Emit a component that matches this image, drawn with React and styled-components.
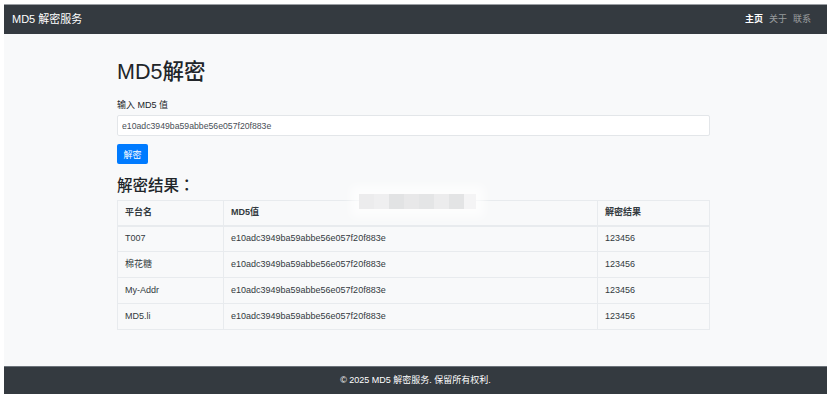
import React from "react";
import styled, { createGlobalStyle } from "styled-components";

const Global = createGlobalStyle`
  html, body { margin: 0; padding: 0; background: #ffffff; }
  body {
    padding: 4px 0 0 4px;
    font-family: "Liberation Sans", Arial, "Noto Sans CJK SC", sans-serif;
    color: #212529;
    font-size: 9px;
    line-height: 1.5;
  }
  * { box-sizing: border-box; }
`;

const Page = styled.div`
  display: flex;
  flex-direction: column;
  height: 390px;
  background: #f8f9fa;
  border-top: 1px solid #9a9ea3;
`;

const NavBar = styled.nav`
  height: 29px;
  background: #343a40;
  display: flex;
  align-items: center;
  justify-content: space-between;
  padding: 0 16px 0 8px;
`;

const Brand = styled.div`
  color: #ffffff;
  font-size: 11px;
`;

const NavLinks = styled.div`
  display: flex;
  gap: 6px;
`;

const NavLink = styled.a`
  font-size: 9px;
  color: ${(p) => (p.$active ? "#ffffff" : "rgba(255,255,255,0.5)")};
  font-weight: ${(p) => (p.$active ? "bold" : "normal")};
  text-decoration: none;
`;

const Main = styled.main`
  flex: 1;
  display: flex;
  justify-content: center;
  padding: 25px 4px 0 0;
`;

const Container = styled.div`
  width: 593px;
  position: relative;
`;

const Title = styled.h1`
  margin: 0 0 13px;
  font-size: 21.5px;
  line-height: 27px;
  font-weight: 500;
`;

const Label = styled.label`
  display: block;
  font-size: 9px;
  line-height: 13px;
  margin-bottom: 3px;
`;

const Input = styled.input`
  display: block;
  width: 100%;
  height: 21px;
  padding: 0 4px;
  font-family: inherit;
  font-size: 8.7px;
  color: #495057;
  background: #ffffff;
  border: 1px solid #e3e6e9;
  border-radius: 2px;
  outline: none;
  margin-bottom: 8px;
`;

const Button = styled.button`
  display: block;
  width: 31px;
  height: 20px;
  padding: 0;
  font-family: inherit;
  font-size: 9px;
  color: #ffffff;
  background: #007bff;
  border: none;
  border-radius: 2px;
  margin-bottom: 11px;
`;

const SubTitle = styled.h3`
  margin: 0 0 4px;
  font-family: "Liberation Sans", Arial, "Noto Sans CJK TC", sans-serif;
  font-size: 15.5px;
  line-height: 21px;
  font-weight: 500;
`;

const Table = styled.table`
  width: 100%;
  border-collapse: collapse;
  font-size: 9px;
  color: #333a40;
`;

const Th = styled.th`
  text-align: left;
  font-weight: bold;
  height: 25px;
  padding: 0 7px;
  border: 1px solid #e8ebee;
  border-bottom: 2px solid #e8ebee;
  width: ${(p) => p.$w || "auto"};
`;

const Td = styled.td`
  height: 26px;
  padding: 0 7px;
  border: 1px solid #e8ebee;
`;

const Mosaic = styled.div`
  position: absolute;
  left: 242px;
  top: 135px;
  display: flex;
  height: 15px;
  box-shadow: 0 0 10px 8px rgba(255, 255, 255, 0.7);
`;

const Tile = styled.div`
  width: ${(p) => p.$w || 15}px;
  height: 100%;
  background: ${(p) => p.$c};
`;

const Footer = styled.footer`
  background: #343a40;
  border-top: 1px solid #6c737a;
  color: #ffffff;
  text-align: center;
  font-size: 9px;
  line-height: 14px;
  padding: 6px 0 7px;
`;

const rows = [
  { name: "T007", hash: "e10adc3949ba59abbe56e057f20f883e", result: "123456" },
  { name: "棉花糖", hash: "e10adc3949ba59abbe56e057f20f883e", result: "123456" },
  { name: "My-Addr", hash: "e10adc3949ba59abbe56e057f20f883e", result: "123456" },
  { name: "MD5.li", hash: "e10adc3949ba59abbe56e057f20f883e", result: "123456" },
];

const tiles = ["#ececed", "#efeff0", "#e2e3e4", "#e8e8e9", "#e4e5e6", "#ececed", "#e3e4e5"];

export default function App() {
  return (
    <>
      <Global />
      <Page>
        <NavBar>
          <Brand>MD5 解密服务</Brand>
          <NavLinks>
            <NavLink $active>主页</NavLink>
            <NavLink>关于</NavLink>
            <NavLink>联系</NavLink>
          </NavLinks>
        </NavBar>
        <Main>
          <Container>
            <Title>MD5解密</Title>
            <Label>输入 MD5 值</Label>
            <Input defaultValue="e10adc3949ba59abbe56e057f20f883e" />
            <Button>解密</Button>
            <SubTitle>解密结果：</SubTitle>
            <Table>
              <thead>
                <tr>
                  <Th $w="106px">平台名</Th>
                  <Th $w="374px">MD5值</Th>
                  <Th>解密结果</Th>
                </tr>
              </thead>
              <tbody>
                {rows.map((r) => (
                  <tr key={r.name}>
                    <Td>{r.name}</Td>
                    <Td>{r.hash}</Td>
                    <Td>{r.result}</Td>
                  </tr>
                ))}
              </tbody>
            </Table>
            <Mosaic>
              {tiles.map((c, i) => (
                <Tile key={i} $c={c} />
              ))}
              <Tile $w={12} $c="#f4f4f5" />
            </Mosaic>
          </Container>
        </Main>
        <Footer>© 2025 MD5 解密服务. 保留所有权利.</Footer>
      </Page>
    </>
  );
}
